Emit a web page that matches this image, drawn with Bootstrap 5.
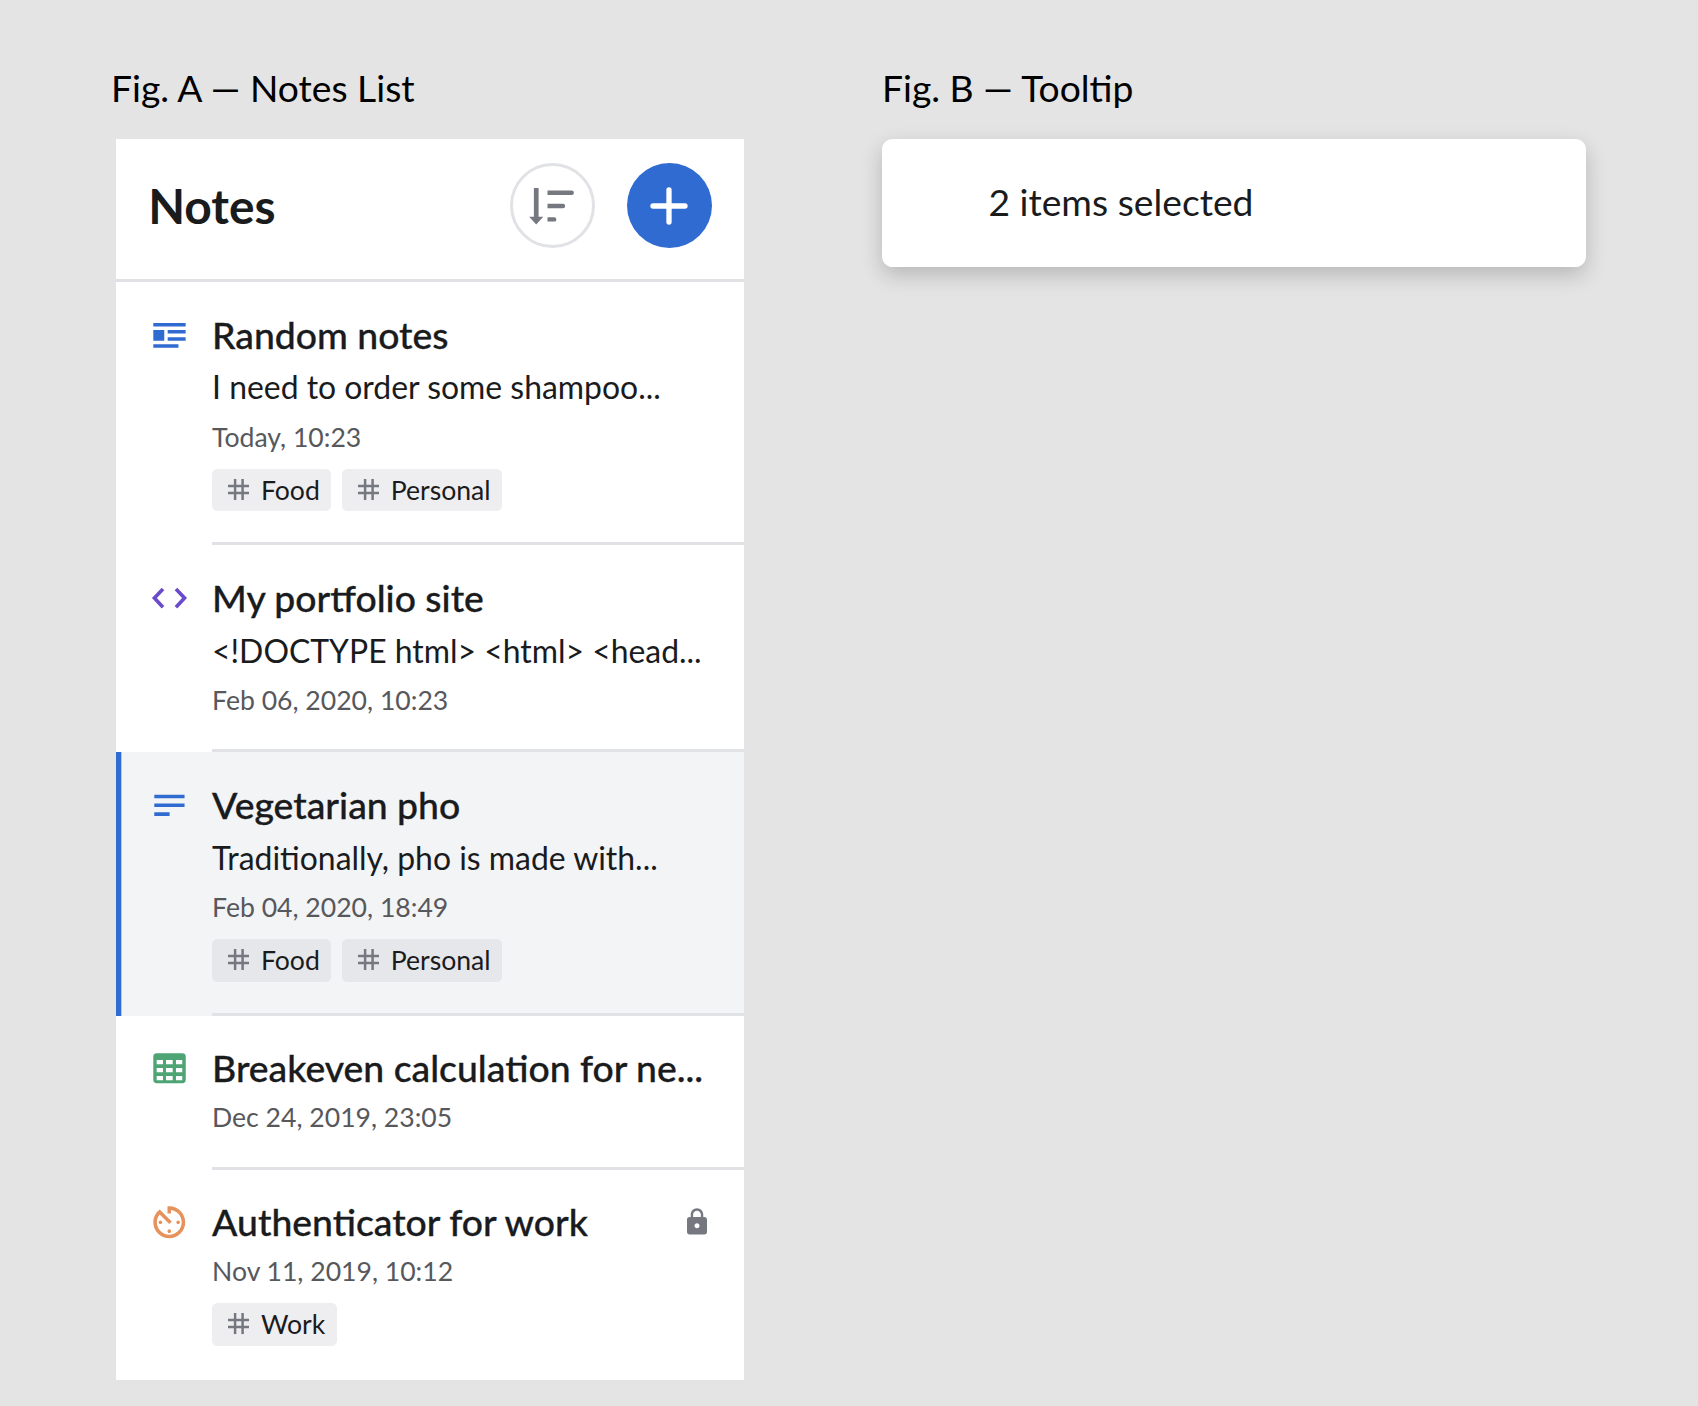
<!DOCTYPE html>
<html lang="en">
<head>
<meta charset="utf-8">
<meta name="viewport" content="width=device-width, initial-scale=1">
<title>Notes List and Tooltip</title>
<link href="https://cdn.jsdelivr.net/npm/bootstrap@5.3.0/dist/css/bootstrap.min.css" rel="stylesheet">
<style>
  body { background: #e4e4e4; color: #1a1b1d; font-family: Lato, "Liberation Sans", sans-serif; min-height: 1406px; overflow-x: hidden; }
  .board { padding: 65px 0 0 111px; }
  .fig-a { width: 771px; }
  .fig-title { font-size: 37.24px; line-height: 45px; height: 74px; font-weight: 400; color: #000; margin: 0; }
  .notes-panel { width: 627.4px; margin-left: 5.3px; background: #fff; }
  .notes-head { height: 143.4px; padding: 0 31.9px 7.4px; border-bottom: 3px solid #e0e1e4; }
  .notes-head h1 { font-size: 47.88px; font-weight: 700; line-height: 58px; margin: 1px 0 0; }
  .head-actions { gap: 31.9px; }
  .round-btn { width: 85.1px; height: 85.1px; padding: 0; }
  .sort-btn { border: 3px solid #e1e2e6; background: #fff; }
  .add-btn { background: #306bd1; border: 0; }
  .note-item { height: 263.1px; padding-left: 31.9px; gap: 21.3px; }
  .note-item.plain { height: 207px; }
  .note-item.brief { height: 154px; }
  .note-item.final { height: 210.1px; }
  .note-item.selected { background: #f3f4f6; box-shadow: inset 5.32px 0 #306bd1; }
  .note-icon { width: 42.56px; height: 42.56px; margin-top: 31.9px; }
  .note-body { padding: 25.7px 31.9px 0 0; border-bottom: 3px solid #e1e2e6; min-width: 0; }
  .final .note-body { border-bottom: 0; }
  .note-title { font-size: 37.34px; font-weight: 500; line-height: 53px; margin: 0 0 2.8px; -webkit-text-stroke: .32px currentColor; }
  .note-text { font-size: 31.92px; line-height: 47px; margin: -.4px 0 6.2px; }
  .note-date { font-size: 26.6px; line-height: 40px; color: #57585c; margin: 0 0 12.2px; }
  .tags { gap: 10.64px; }
  .tag { height: 42.56px; border-radius: 5.32px; background: #eeeef1; font-size: 26.6px; line-height: 42.56px; padding: 0 11.4px 0 15.96px; gap: 11.64px; }
  .tag svg { width: 21.3px; height: 21.3px; margin-top: -1px; }
  .selected .tag { background: #e6e7eb; }
  .lock { width: 30px; height: 30px; margin-top: 11.6px; }
  .tip-card { width: 704.4px; height: 127.7px; padding: 0 0 2px 106.4px; border-radius: 10.64px; background: #fff; font-size: 37.24px; box-shadow: 0 8px 21px rgba(0,0,0,.2); }
</style>
</head>
<body>
<svg class="d-none" aria-hidden="true">
  <symbol id="hash" viewBox="0 0 21.3 21.3"><path d="M7.1 0v21.3M14.6 0v21.3M0 6.9h21.3M0 14.1h21.3" fill="none" stroke="#767880" stroke-width="2.5"/></symbol>
</svg>
<main class="board d-flex align-items-start">
  <section class="fig-a flex-shrink-0">
    <h2 class="fig-title">Fig. A — Notes List</h2>
    <div class="notes-panel">
      <header class="notes-head d-flex align-items-center">
        <h1 class="me-auto">Notes</h1>
        <div class="head-actions d-flex">
          <button class="btn round-btn sort-btn rounded-circle d-flex align-items-center justify-content-center" aria-label="Sort">
            <svg width="50" height="50" viewBox="0 0 50 50" fill="#767880"><path d="M6.9 6.9h4.7v28.9h4.7L9.2 43.5 2.2 35.8h4.7z"/><path d="M20.5 9.5h24.2a2.2 2.2 0 0 1 0 4.4H20.5zM20.5 22.8H36a2.2 2.2 0 0 1 0 4.4H20.5zM20.5 36.2h6.7a2.2 2.2 0 0 1 0 4.4h-6.7z"/></svg>
          </button>
          <button class="btn round-btn add-btn rounded-circle d-flex align-items-center justify-content-center" aria-label="Add">
            <svg width="40" height="40" viewBox="0 0 40 40"><path d="M20 4v32M4 20h32" fill="none" stroke="#fff" stroke-width="5.3" stroke-linecap="round"/></svg>
          </button>
        </div>
      </header>

      <article class="note-item d-flex">
        <svg class="note-icon flex-shrink-0" viewBox="0 0 42.6 42.6" fill="#306bd1"><path d="M5.3 8.9h32.4v3.6H5.3zM5.3 15.9h11v11h-11zM19.7 16.1h18v3.5h-18zM19.7 23.3h18v3.5h-18zM5.3 30.4h25.2v3.5H5.3z"/></svg>
        <div class="note-body flex-grow-1">
          <h3 class="note-title">Random notes</h3>
          <p class="note-text text-nowrap">I need to order some shampoo...</p>
          <p class="note-date">Today, 10:23</p>
          <div class="tags d-flex">
            <span class="tag d-flex align-items-center"><svg><use href="#hash"/></svg>Food</span>
            <span class="tag d-flex align-items-center"><svg><use href="#hash"/></svg>Personal</span>
          </div>
        </div>
      </article>

      <article class="note-item plain d-flex">
        <svg class="note-icon flex-shrink-0" viewBox="0 0 42.6 42.6" fill="none" stroke="#6a4bcb" stroke-width="3.6"><path d="M15 12l-8.6 9.1L15 30.3M28 12l8.6 9.1-8.6 9.2"/></svg>
        <div class="note-body flex-grow-1">
          <h3 class="note-title">My portfolio site</h3>
          <p class="note-text text-nowrap">&lt;!DOCTYPE html&gt; &lt;html&gt; &lt;head...</p>
          <p class="note-date">Feb 06, 2020, 10:23</p>
        </div>
      </article>

      <article class="note-item selected d-flex">
        <svg class="note-icon flex-shrink-0" viewBox="0 0 42.6 42.6" fill="#306bd1"><path d="M6.3 10.7h30.3v3.5H6.3zM6.3 19.6h30.3v3.5H6.3zM6.3 28.4h15.3v3.6H6.3z"/></svg>
        <div class="note-body flex-grow-1">
          <h3 class="note-title">Vegetarian pho</h3>
          <p class="note-text text-nowrap">Traditionally, pho is made with...</p>
          <p class="note-date">Feb 04, 2020, 18:49</p>
          <div class="tags d-flex">
            <span class="tag d-flex align-items-center"><svg><use href="#hash"/></svg>Food</span>
            <span class="tag d-flex align-items-center"><svg><use href="#hash"/></svg>Personal</span>
          </div>
        </div>
      </article>

      <article class="note-item brief d-flex">
        <svg class="note-icon flex-shrink-0" viewBox="0 0 42.6 42.6"><rect x="5.3" y="6.3" width="32.5" height="30" rx="3.5" fill="#4ea475"/><path fill="#fff" d="M8.7 13H15v4.3H8.7zM18 13h6.7v4.3H18zM28 13h6.3v4.3H28zM8.7 21H15v4.3H8.7zM18 21h6.7v4.3H18zM28 21h6.3v4.3H28zM8.7 29H15v4.3H8.7zM18 29h6.7v4.3H18zM28 29h6.3v4.3H28z"/></svg>
        <div class="note-body flex-grow-1">
          <h3 class="note-title text-nowrap">Breakeven calculation for ne...</h3>
          <p class="note-date">Dec 24, 2019, 23:05</p>
        </div>
      </article>

      <article class="note-item final d-flex">
        <svg class="note-icon flex-shrink-0" viewBox="0 0 24 24" fill="#e7915b"><path d="M11 17c0 .55.45 1 1 1s1-.45 1-1-.45-1-1-1-1 .45-1 1zm0-14v4h2V5.08c3.39.49 6 3.39 6 6.92 0 3.87-3.13 7-7 7s-7-3.13-7-7c0-1.68.59-3.22 1.58-4.42L12 13l1.41-1.41-6.8-6.8v.02C4.42 6.45 3 9.05 3 12c0 4.97 4.02 9 9 9 4.97 0 9-4.03 9-9s-4.03-9-9-9h-1zm7 9c0-.55-.45-1-1-1s-1 .45-1 1 .45 1 1 1 1-.45 1-1zM6 12c0 .55.45 1 1 1s1-.45 1-1-.45-1-1-1-1 .45-1 1z"/></svg>
        <div class="note-body flex-grow-1">
          <div class="d-flex justify-content-between">
            <h3 class="note-title">Authenticator for work</h3>
            <svg class="lock" viewBox="0 0 24 24" fill="#767880"><path d="M18 8h-1V6c0-2.76-2.24-5-5-5S7 3.24 7 6v2H6c-1.1 0-2 .9-2 2v10c0 1.1.9 2 2 2h12c1.1 0 2-.9 2-2V10c0-1.1-.9-2-2-2zm-6 9c-1.1 0-2-.9-2-2s.9-2 2-2 2 .9 2 2-.9 2-2 2zm3.1-9H8.9V6c0-1.71 1.39-3.1 3.1-3.1 1.71 0 3.1 1.39 3.1 3.1v2z"/></svg>
          </div>
          <p class="note-date">Nov 11, 2019, 10:12</p>
          <div class="tags d-flex">
            <span class="tag d-flex align-items-center"><svg><use href="#hash"/></svg>Work</span>
          </div>
        </div>
      </article>
    </div>
  </section>

  <section>
    <h2 class="fig-title">Fig. B — Tooltip</h2>
    <div class="tip-card d-flex align-items-center">2 items selected</div>
  </section>
</main>
<script src="https://cdn.jsdelivr.net/npm/bootstrap@5.3.0/dist/js/bootstrap.bundle.min.js"></script>
</body>
</html>
